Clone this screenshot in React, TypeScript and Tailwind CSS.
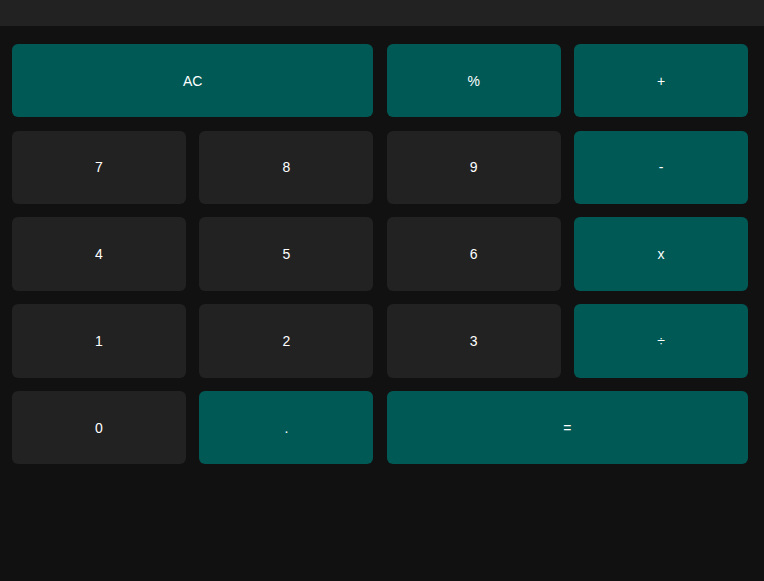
const keys: { label: string; span?: boolean; op?: boolean }[] = [
  { label: "AC", span: true, op: true },
  { label: "%", op: true },
  { label: "+", op: true },
  { label: "7" },
  { label: "8" },
  { label: "9" },
  { label: "-", op: true },
  { label: "4" },
  { label: "5" },
  { label: "6" },
  { label: "x", op: true },
  { label: "1" },
  { label: "2" },
  { label: "3" },
  { label: "÷", op: true },
  { label: "0" },
  { label: ".", op: true },
  { label: "=", span: true, op: true },
];

export default function App() {
  return (
    <div className="min-h-[581px] bg-[#111111] font-['Liberation_Sans',Arial,sans-serif]">
      <div className="h-[26px] bg-[#222222]" />
      <div className="grid grid-cols-4 auto-rows-[73.4px] gap-[13.33px] pl-3 pr-4 pt-[18px]">
        {keys.map((k) => (
          <button
            key={k.label}
            className={`${k.span ? "col-span-2" : ""} ${
              k.op ? "bg-[#005955]" : "bg-[#222222]"
            } flex items-center justify-center rounded-md text-sm text-white`}
          >
            {k.label}
          </button>
        ))}
      </div>
    </div>
  );
}
